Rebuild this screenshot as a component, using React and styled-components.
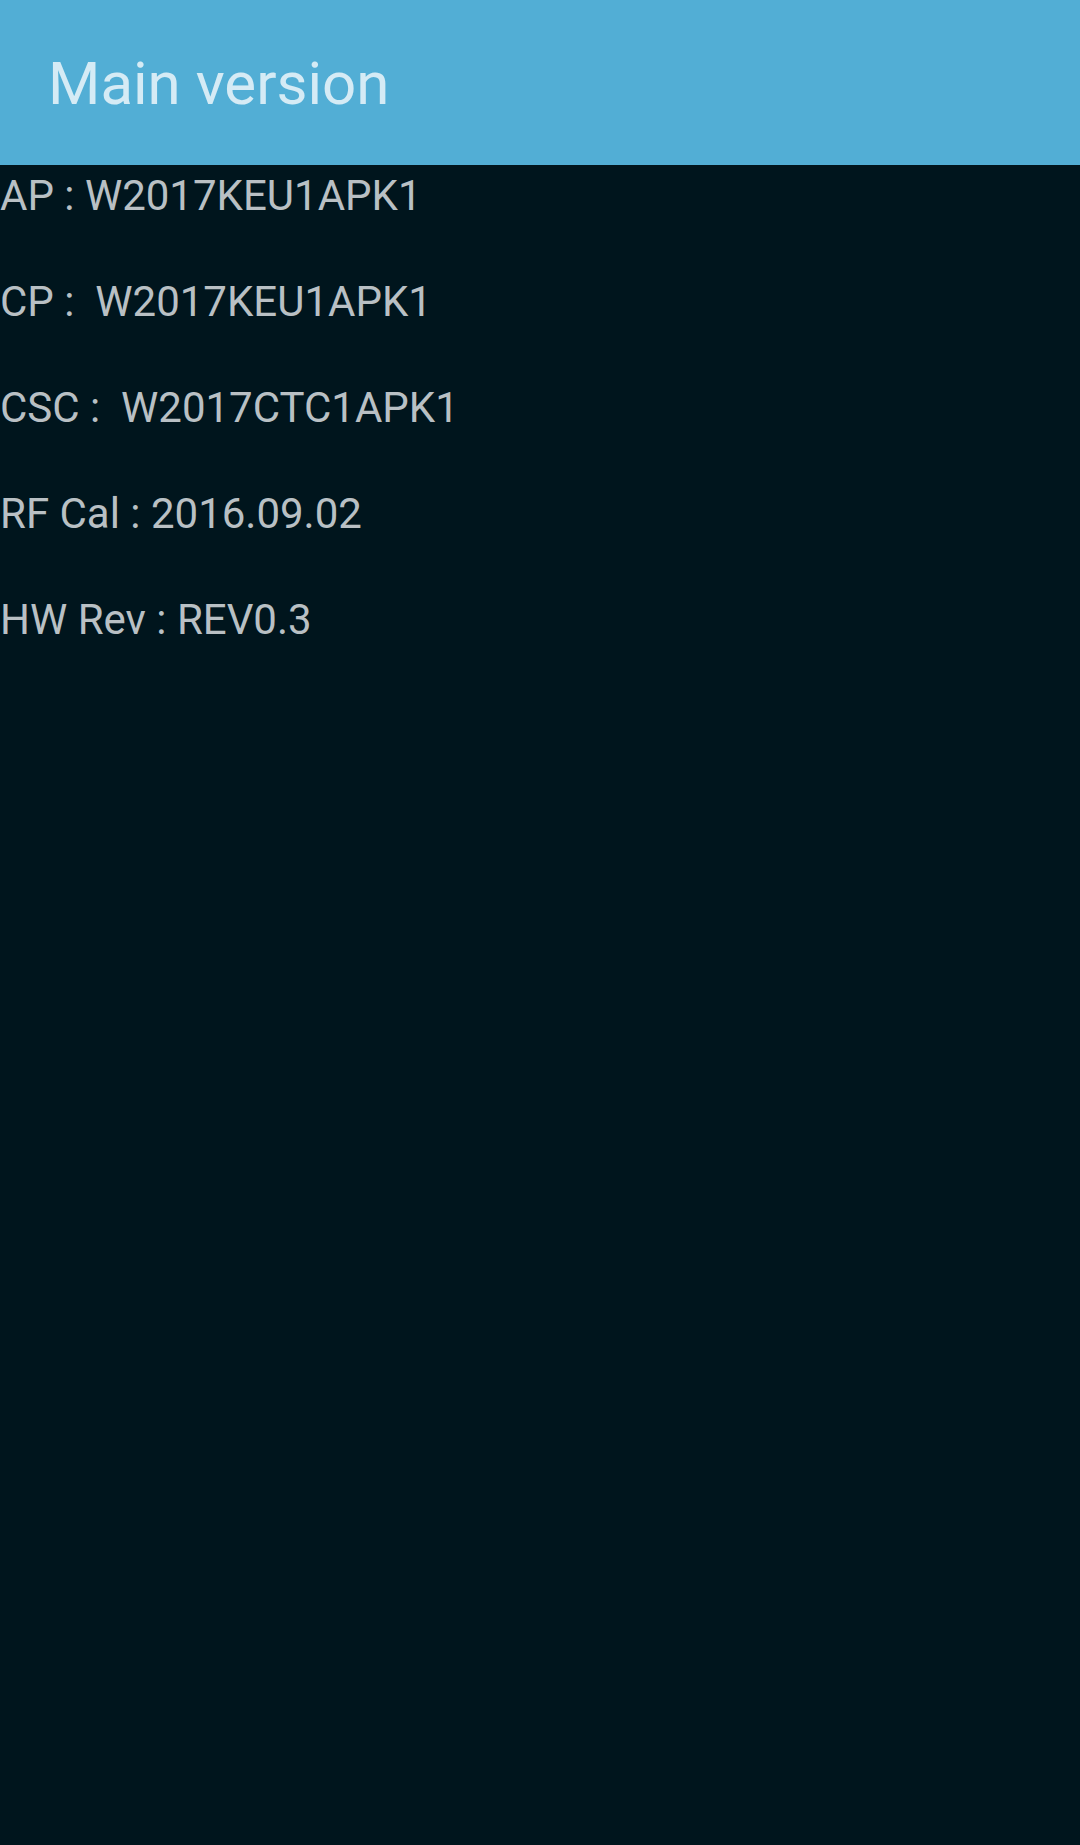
import React from "react";
import styled, { createGlobalStyle } from "styled-components";

const GlobalStyle = createGlobalStyle`
  html, body {
    margin: 0;
    padding: 0;
    background: #00151d;
  }
  body {
    font-family: Roboto, "Noto Sans", sans-serif;
  }
`;

const Screen = styled.div`
  width: 1080px;
  min-height: 1845px;
  background: #00151d;
  display: flex;
  flex-direction: column;
`;

const Header = styled.header`
  height: 165px;
  background: #52aed5;
  display: flex;
  align-items: center;
  padding-left: 48px;
  padding-top: 2px;
  box-sizing: border-box;
`;

const Title = styled.h1`
  margin: 0;
  font-weight: 400;
  font-size: 60px;
  color: #d5ebf5;
`;

const List = styled.div`
  display: flex;
  flex-direction: column;
  gap: 57px;
  padding-top: 6px;
`;

const Line = styled.div`
  font-size: 42px;
  color: #b9c0c4;
  white-space: pre;
`;

const rows = [
  "AP : W2017KEU1APK1",
  "CP :  W2017KEU1APK1",
  "CSC :  W2017CTC1APK1",
  "RF Cal : 2016.09.02",
  "HW Rev : REV0.3",
];

export default function App() {
  return (
    <Screen>
      <GlobalStyle />
      <Header>
        <Title>Main version</Title>
      </Header>
      <List>
        {rows.map((r) => (
          <Line key={r}>{r}</Line>
        ))}
      </List>
    </Screen>
  );
}
